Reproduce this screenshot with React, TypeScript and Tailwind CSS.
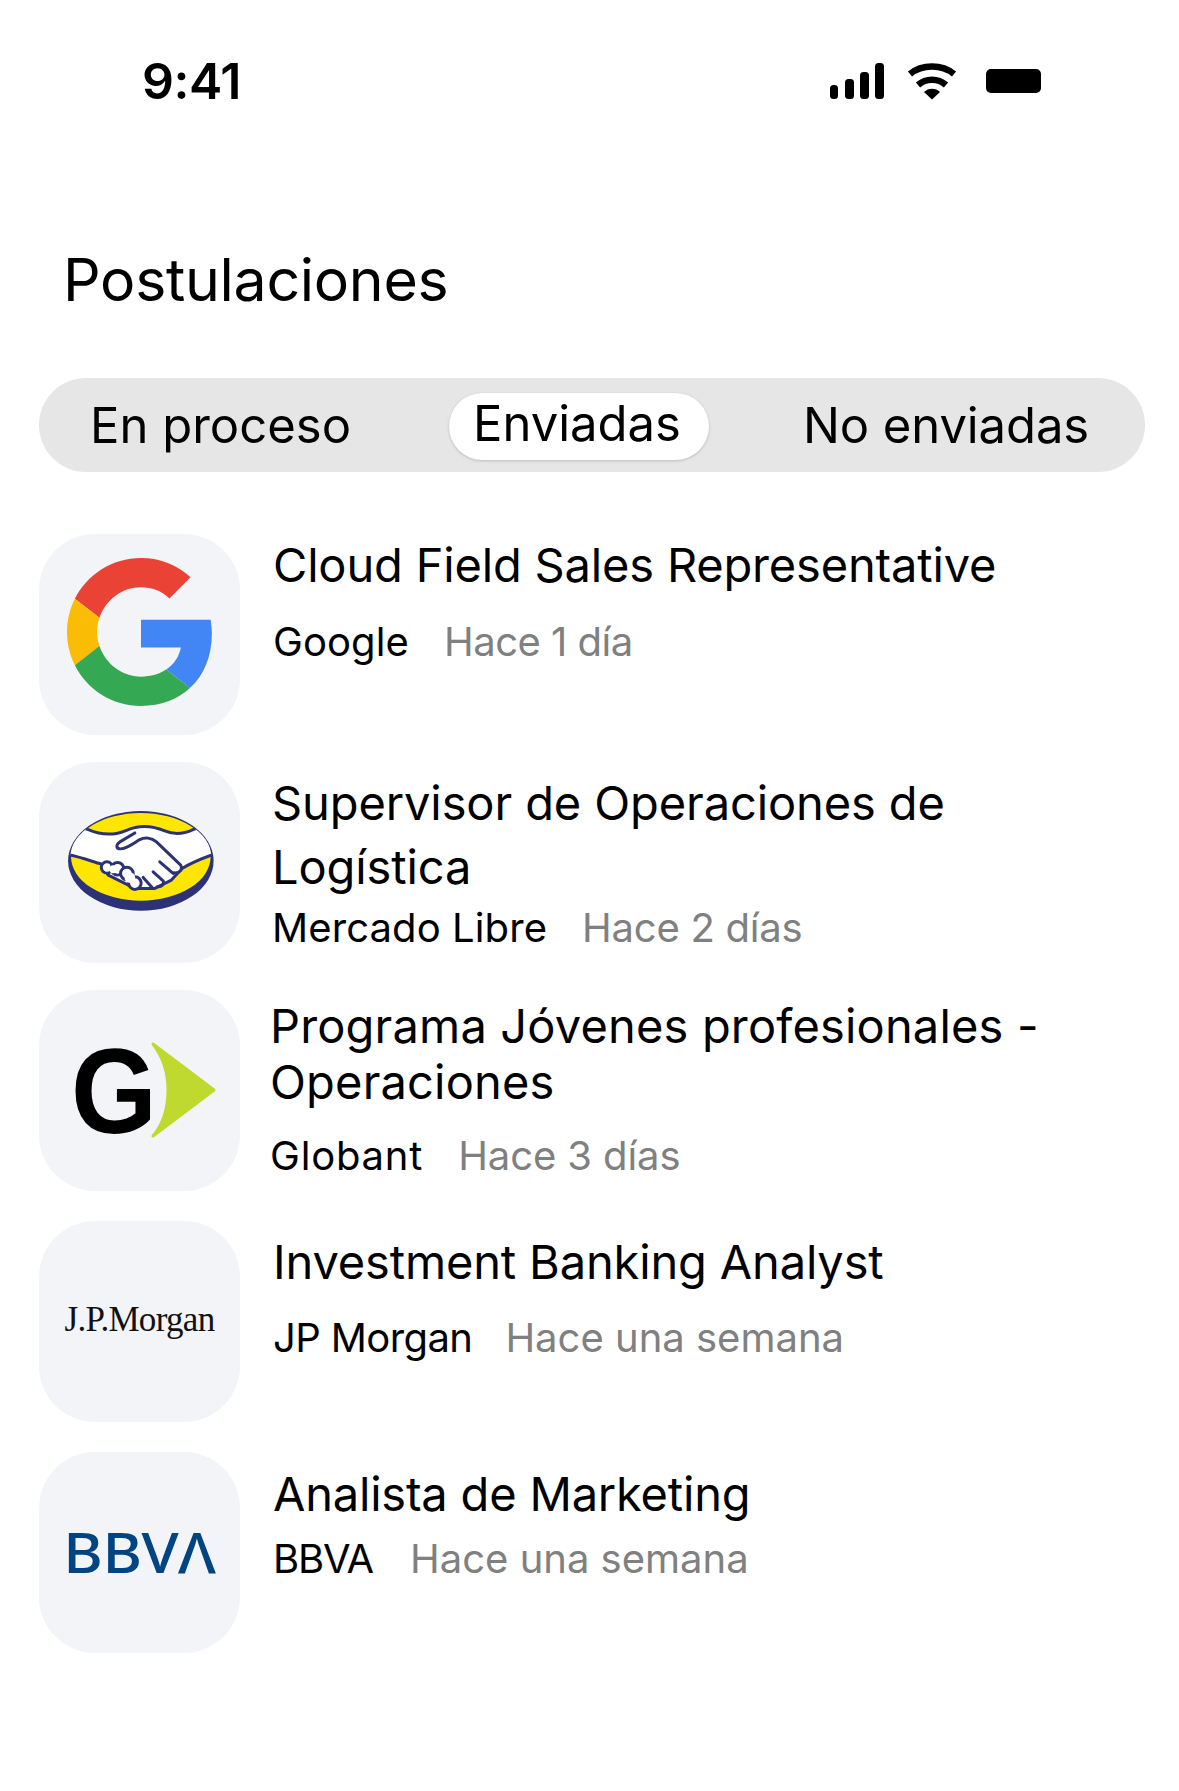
import React from "react";

const GoogleLogo = () => (
  <svg viewBox="0 0 48 48" className="w-[148px] h-[150px] ml-[2px] -mt-[6px]">
    <path fill="#EA4335" d="M24 9.5c3.54 0 6.71 1.22 9.21 3.6l6.85-6.85C35.9 2.38 30.47 0 24 0 14.62 0 6.51 5.38 2.56 13.22l7.98 6.19C12.43 13.72 17.74 9.5 24 9.5z" />
    <path fill="#4285F4" d="M46.98 24.55c0-1.57-.15-3.09-.38-4.55H24v9.02h12.94c-.58 2.96-2.26 5.48-4.78 7.18l7.73 6c4.51-4.18 7.09-10.36 7.09-17.65z" />
    <path fill="#FBBC05" d="M10.53 28.59c-.48-1.45-.76-2.99-.76-4.59s.27-3.14.76-4.59l-7.98-6.19C.92 16.46 0 20.12 0 24c0 3.88.92 7.54 2.56 10.78l7.97-6.19z" />
    <path fill="#34A853" d="M24 48c6.48 0 11.93-2.13 15.89-5.81l-7.73-6c-2.15 1.45-4.92 2.3-8.16 2.3-6.26 0-11.57-4.22-13.47-9.91l-7.98 6.19C6.51 42.62 14.62 48 24 48z" />
  </svg>
);

const MercadoLogo = () => (
  <svg viewBox="30 50 460 325" className="w-[153px] h-[108px] ml-[4px] -mt-[4px]">
    <defs>
      <clipPath id="mlclip">
        <ellipse cx="258" cy="200" rx="212" ry="132" />
      </clipPath>
    </defs>
    <ellipse cx="258" cy="212" rx="219" ry="150" fill="#2D3277" />
    <ellipse cx="258" cy="200" rx="210" ry="132" fill="#FFE600" />
    <g clipPath="url(#mlclip)" stroke="#2D3277" strokeWidth="9" strokeLinejoin="round" strokeLinecap="round">
      <path
        fill="#fff"
        d="M30 192C70 198 105 212 140 222L160 255L240 295L300 295L350 270L382 235C410 218 440 205 490 188L490 95L415 118C390 130 360 135 330 122C290 105 250 105 215 120C180 135 140 135 100 118L25 95Z"
      />
      <path fill="#fff" d="M240 128L195 155C183 163 182 176 197 176C215 176 235 160 255 148C270 140 290 142 305 155L378 225C385 238 375 250 358 248" />
      <path fill="none" d="M315 215L355 250M295 245L325 272C330 282 320 292 308 290M265 262L292 292" />
      <circle cx="156" cy="232" r="17" fill="#fff" />
      <circle cx="188" cy="236" r="19" fill="#fff" />
      <circle cx="216" cy="250" r="19" fill="#fff" />
      <circle cx="240" cy="279" r="19" fill="#fff" />
      <circle cx="225" cy="262" r="16" fill="#fff" stroke="none" />
      <circle cx="175" cy="237" r="12" fill="#fff" stroke="none" />
    </g>
  </svg>
);

const GlobantLogo = () => (
  <div className="flex items-center pl-[32px] w-full">
    <span className="font-['Liberation_Sans',sans-serif] font-bold text-[120px] leading-none text-black w-[78px] inline-block scale-x-[0.92] origin-left">G</span>
    <svg viewBox="0 0 66 98" className="w-[68px] h-[98px] -mt-[2px]">
      <path fill="#BFD92F" stroke="#BFD92F" strokeWidth="3" strokeLinejoin="round" d="M3 3L64 49L3 95C14 82 18 64 18 49C18 33 13 16 3 3Z" />
    </svg>
  </div>
);

const JPLogo = () => (
  <span className="font-['Liberation_Serif',serif] text-[35px] leading-none tracking-[-0.7px] text-[#111] whitespace-nowrap -mt-[4px]">
    J.P.Morgan
  </span>
);

const BBVALogo = () => (
  <span className="font-['Noto_Sans',sans-serif] font-medium text-[56px] leading-none tracking-[-0.5px] text-[#004481] whitespace-nowrap -mt-[4px] inline-block scale-x-[1.08]">
    BBVΛ
  </span>
);

const rows = [
  {
    title: ["Cloud Field Sales Representative"],
    company: "Google",
    time: "Hace 1 día",
    logo: <GoogleLogo />,
    rowClass: "mt-[62px]",
    textClass: "ml-[33px] -mt-[1px]",
    titleClass: "leading-[64px] tracking-[-0.17px]",
    subClass: "mt-[20px] gap-[35px]",
    companyClass: "tracking-[0.1px]",
    timeClass: "tracking-[-0.5px]",
  },
  {
    title: ["Supervisor de Operaciones de", "Logística"],
    company: "Mercado Libre",
    time: "Hace 2 días",
    logo: <MercadoLogo />,
    rowClass: "mt-[27px]",
    textClass: "ml-[32px] pt-[9px]",
    titleClass: "leading-[64px] tracking-[-0.1px]",
    subClass: "mt-[4px] gap-[35px]",
    companyClass: "tracking-[0.1px]",
    timeClass: "tracking-[-0.25px]",
  },
  {
    title: ["Programa Jóvenes profesionales -", "Operaciones"],
    company: "Globant",
    time: "Hace 3 días",
    logo: <GlobantLogo />,
    rowClass: "mt-[27px]",
    textClass: "ml-[30px] pt-[8px]",
    titleClass: "leading-[56px] tracking-[0.17px]",
    subClass: "mt-[21px] gap-[35px]",
    companyClass: "tracking-[0.8px]",
    timeClass: "tracking-[-0.1px]",
  },
  {
    title: ["Investment Banking Analyst"],
    company: "JP Morgan",
    time: "Hace una semana",
    logo: <JPLogo />,
    rowClass: "mt-[30px]",
    textClass: "ml-[33px] pt-[9px]",
    titleClass: "leading-[64px] tracking-[-0.15px]",
    subClass: "mt-[19px] gap-[33px]",
    companyClass: "tracking-[-0.6px]",
    timeClass: "",
  },
  {
    title: ["Analista de Marketing"],
    company: "BBVA",
    time: "Hace una semana",
    logo: <BBVALogo />,
    rowClass: "mt-[30px]",
    textClass: "ml-[33px] pt-[10px]",
    titleClass: "leading-[64px] tracking-[-0.2px]",
    subClass: "mt-[8px] gap-[37px]",
    companyClass: "tracking-[-1.2px]",
    timeClass: "",
  },
];

export default function App() {
  return (
    <div className="w-[1179px] h-[1791px] bg-white text-black overflow-hidden font-['Inter',sans-serif]">
      <div className="flex items-start h-[162px]">
        <div className="ml-[142px] mt-[50px] text-[50px] leading-[62px] font-semibold tracking-[-0.5px]">9:41</div>
        <div className="ml-auto mr-[138px] mt-[63px] flex items-start">
          <svg width="55" height="37" viewBox="0 0 55 37" fill="#000">
            <rect x="0" y="22" width="8" height="14" rx="3.5" />
            <rect x="15" y="16" width="9" height="20" rx="3.5" />
            <rect x="30" y="9" width="9" height="27" rx="3.5" />
            <rect x="45" y="0" width="9" height="36" rx="3.5" />
          </svg>
          <svg width="50" height="37" viewBox="0 0 50 37" className="ml-[22px]">
            <path d="M3 11C15 1 35 1 47 11" fill="none" stroke="#000" strokeWidth="6.5" />
            <path d="M11 22C19 15 31 15 39 22" fill="none" stroke="#000" strokeWidth="6.5" />
            <path d="M17 29C21 24.500 29 24.500 33 29L25 36.500Z" fill="#000" />
          </svg>
          <div className="ml-[29px] mt-[6px] w-[55px] h-[24px] rounded-[5px] bg-black" />
        </div>
      </div>

      <h1 className="ml-[63px] mt-[83px] text-[59px] leading-[70px] font-normal tracking-[-0.3px]">Postulaciones</h1>

      <div className="ml-[39px] mt-[63px] w-[1106px] h-[94px] rounded-full bg-[#e6e6e6] flex items-center text-[49px] leading-none">
        <div className="ml-[51px] w-[359px]">En proceso</div>
        <div className="w-[260px] h-[67px] mt-[3px] rounded-full bg-white shadow-[0_1px_3px_rgba(0,0,0,0.18)] flex items-center justify-center pb-[6px] pr-[4px]">
          Enviadas
        </div>
        <div className="ml-[94px] whitespace-nowrap tracking-[-0.1px]">No enviadas</div>
      </div>

      {rows.map((r) => (
        <div key={r.company} className={`flex items-start ${r.rowClass}`}>
          <div className="ml-[39px] w-[201px] h-[201px] shrink-0 rounded-[56px] bg-[#f2f4f8] flex items-center justify-center">
            {r.logo}
          </div>
          <div className={r.textClass}>
            <div className={`text-[47px] ${r.titleClass}`}>
              {r.title.map((t) => (
                <div key={t} className="whitespace-nowrap">{t}</div>
              ))}
            </div>
            <div className={`flex text-[40px] leading-[50px] ${r.subClass}`}>
              <span className={r.companyClass}>{r.company}</span>
              <span className={`text-[#808080] ${r.timeClass}`}>{r.time}</span>
            </div>
          </div>
        </div>
      ))}
    </div>
  );
}
